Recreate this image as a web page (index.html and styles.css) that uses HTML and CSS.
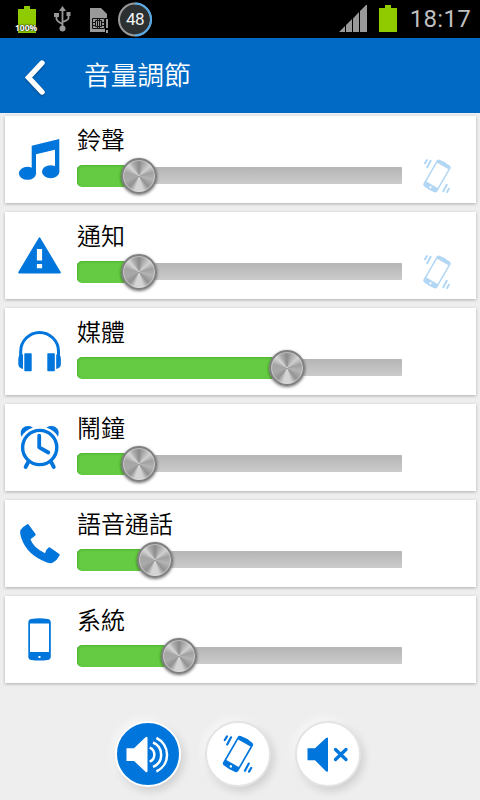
FILE: index.html
```html
<!DOCTYPE html>
<html lang="zh-Hant">
<head>
<meta charset="utf-8">
<title>音量調節</title>
<link rel="stylesheet" href="styles.css">
</head>
<body>
<svg class="defs" aria-hidden="true">
  <symbol id="vibrate" viewBox="0 0 36 40">
    <g transform="rotate(30 18 20)"><path fill="currentColor" fill-rule="evenodd" d="M12 4.600Q18 3.400 24 4.600Q26 5 26 7V33Q26 35 24 35.400Q18 36.600 12 35.400Q10 35 10 33V7Q10 5 12 4.600ZM11.500 8.500V30H24.500V8.500ZM18 31.900A1.100 1.100 0 1 0 18 34.100A1.100 1.100 0 1 0 18 31.900Z"/></g>
    <path fill="none" stroke="currentColor" stroke-width="2" stroke-linecap="round" d="M8 4L6 7.300M11.700 4.800L8.200 11.300M28 36L30 32.700M24.300 35.200L27.800 28.700"/>
  </symbol>
</svg>
<div class="statusbar">
  <div class="charge"><svg width="18" height="27"><path fill="#90cb00" d="M0 3h6V0h6v3h6v24H0z"/></svg><span>100%</span></div>
  <svg class="usb" width="18" height="27" fill="none" stroke="#999" stroke-width="1.800"><path d="M8.500 24V3M2.500 9v4q0 2 6 5M14.500 8v4q0 2-6 4"/><path fill="#999" stroke="none" d="M8.500 0L12 5H5zM0 7h5v4H0zM12.500 6h4v4h-4z"/><circle cx="8.500" cy="22.500" r="3" fill="#999" stroke="none"/></svg>
  <svg class="sim" width="20" height="26"><path fill="#999" d="M0 0h11l6 6v18H0z"/><path fill="none" stroke="#111" d="M2.500 10.500h12v10h-12zM5.500 12.500h6v6h-6zM7.500 10v11M9.500 10v11M2 14.500h3M12 14.500h3M2 17.500h3M12 17.500h3"/><path fill="#000" d="M15 10h3v16h-3z"/><path fill="#999" d="M16 11h2v9h-2zM16 22h2v3h-2z"/></svg>
  <div class="gauge"><svg width="36" height="36" fill="none" stroke-width="2"><circle cx="17" cy="18.500" r="16" fill="#2c3031" stroke="#999"/><path stroke="#55aae6" d="M17 2.500A16 16 0 0 1 17 34.500"/></svg><span>48</span></div>
  <svg class="signal" width="28" height="27" fill="#999"><path d="M0 27L6 21V27zM7 20L13 14V27H7zM14 13.500L20 7V27h-6zM21 6L27 0h1V27h-7z"/></svg>
  <svg class="battery" width="18" height="27"><path fill="#90cb00" d="M0 3h6V0h6v3h6v24H0z"/></svg>
  <span class="clock">18:17</span>
</div>
<header class="header">
  <svg class="back" width="24" height="40"><path fill="none" stroke="#fff" stroke-width="5.400" stroke-linecap="round" stroke-linejoin="miter" d="M19 5L5.500 19.500L19 34"/></svg>
  <h1>音量調節</h1>
</header>
<main class="list">
  <section class="card">
    <svg class="icon" viewBox="0 0 48 48"><path d="M15.700 9.700L43.300 3V35.700H39V13.700L20 18.200V37.300H15.700Z"/><ellipse cx="11.500" cy="37.300" rx="8.600" ry="6.500"/><ellipse cx="34.700" cy="35.700" rx="8.700" ry="6.500"/></svg>
    <div class="level"><h2>鈴聲</h2><div class="track"><div class="fill" style="width:62px"><i class="knob"></i></div></div></div>
    <svg class="mode"><use href="#vibrate"/></svg>
  </section>
  <section class="card">
    <svg class="icon" viewBox="0 0 48 48"><path stroke="currentColor" stroke-width="2" stroke-linejoin="round" d="M23.500 6.400L43.800 40.500H3.200Z"/><path fill="#fff" d="M20.900 17h5.200v11.500h-5.200zM20.900 32h5.200v4.300h-5.200z"/></svg>
    <div class="level"><h2>通知</h2><div class="track"><div class="fill" style="width:62px"><i class="knob"></i></div></div></div>
    <svg class="mode"><use href="#vibrate"/></svg>
  </section>
  <section class="card">
    <svg class="icon" viewBox="0 0 48 48"><path fill="none" stroke="currentColor" stroke-width="3" d="M4.700 30V23.500A18.900 19 0 0 1 42.500 23.500V30"/><path d="M7 26.500V41Q2.300 40 2.300 36V31Q2.300 28 3.800 26.500ZM40.200 26.500V41Q44.900 40 44.900 36V31Q44.900 28 43.400 26.500Z"/><rect x="8.300" y="25.300" width="7.400" height="17.900" rx=".7"/><rect x="31.300" y="25.300" width="7.500" height="17.900" rx=".7"/></svg>
    <div class="level"><h2>媒體</h2><div class="track"><div class="fill" style="width:210px"><i class="knob"></i></div></div></div>
  </section>
  <section class="card">
    <svg class="icon" viewBox="0 0 48 48"><path d="M5.500 12.700Q3 6 8.500 2.800Q12.500 1 17 3.500Q8.500 6.500 5.500 12.700ZM41.900 12.700Q44.400 6 38.900 2.800Q34.900 1 30.400 3.500Q38.900 6.500 41.900 12.700Z"/><g fill="none" stroke="currentColor" stroke-linecap="round"><circle cx="23.700" cy="23.500" r="17.100" stroke-width="3.400"/><path stroke-width="3.800" stroke-linejoin="round" d="M23.200 11.700V23.300L32.300 28.500M12 38.500L9.600 43M35.400 38.500L37.800 43"/></g></svg>
    <div class="level"><h2>鬧鐘</h2><div class="track"><div class="fill" style="width:62px"><i class="knob"></i></div></div></div>
  </section>
  <section class="card">
    <svg class="icon" viewBox="0 0 48 48"><path d="M4.500 10Q7 6.500 11.300 4.200Q12 3.800 12.600 4.500L19.500 14Q20 15 19 15.800L14.500 19.300Q17 27.500 29 33.200Q29.700 30 32.300 27.800Q33 27 34 27.600L43.300 34Q44 34.500 43.500 35.500Q41 40.500 37 42.600Q34.500 43.800 31 42.500Q11 35 5.500 18.500Q3.400 12.500 4.500 10Z"/></svg>
    <div class="level"><h2>語音通話</h2><div class="track"><div class="fill" style="width:78px"><i class="knob"></i></div></div></div>
  </section>
  <section class="card">
    <svg class="icon" viewBox="0 0 48 48"><path fill-rule="evenodd" d="M15.500 2.900Q23.500 1.700 31.500 2.900Q34.800 3.300 34.800 6.500V40.500Q34.800 43.600 31.500 44Q23.500 45.200 15.500 44Q12.300 43.600 12.300 40.500V6.500Q12.300 3.300 15.500 2.900ZM14 7.500V36H33V7.500ZM22.500 40V42H24.500V40Z"/></svg>
    <div class="level"><h2>系統</h2><div class="track"><div class="fill" style="width:102px"><i class="knob"></i></div></div></div>
  </section>
</main>
<footer class="modes">
  <button class="round active" aria-label="鈴聲"><svg class="glyph"><path fill="#fff" d="M11.500 27.300h7.500L30.500 16.300q2-1.500 2 .7v33q0 2.300-2 .7L19 40h-7.500z"/><path fill="none" stroke="#fff" stroke-width="2.500" d="M34.700 26.700A7.600 7.600 0 0 1 34.700 40.700M38 21.500A13.200 13.200 0 0 1 38 45.900M41.400 17A18.500 18.500 0 0 1 41.400 50.500"/></svg></button>
  <button class="round" aria-label="震動"><svg class="shake"><use href="#vibrate"/></svg></button>
  <button class="round" aria-label="靜音"><svg class="glyph"><path fill="currentColor" d="M12.500 27.300H20L31 17q2-1.500 2 .7v31.800q0 2.300-2 .7L20 39.300h-7.500z"/><path fill="none" stroke="currentColor" stroke-width="3.300" stroke-linecap="round" d="M40.500 28.500L51 38.500M51 28.500L40.500 38.500"/></svg></button>
</footer>
</body>
</html>
```

FILE: styles.css
```css
* { box-sizing: border-box; }
body {
  margin: 0;
  height: 800px;
  overflow: hidden;
  background: #eee;
  color: #000;
  font-family: Roboto, "Noto Sans CJK TC", sans-serif;
}
svg { display: block; flex: none; }
.defs { position: absolute; width: 0; height: 0; }

.statusbar { display: flex; height: 38px; padding: 0 9px 0 18px; background: #000; }
.charge { position: relative; margin-top: 6px; }
.charge span {
  position: absolute; left: -3px; top: 16px;
  font: bold 8.500px/12px "Open Sans", sans-serif;
  color: #fff; text-shadow: 0 0 1px #000, 0 0 2px #000;
}
.usb { margin: 6px 0 0 18px; }
.sim { margin: 8px 0 0 18px; }
.gauge { position: relative; margin: 1px 0 0 8px; }
.gauge span {
  position: absolute; top: 0; left: 0; width: 34px;
  color: #f2f2f2; text-align: center; font-size: 17px; line-height: 36px; letter-spacing: -.5px;
}
.signal { margin: 5px 0 0 auto; }
.battery { margin: 5px 0 0 12px; }
.clock {
  margin-left: 13px;
  color: #bfbfbf; font-size: 24px; font-weight: 400; line-height: 39px; letter-spacing: .3px;
}

.header { display: flex; align-items: center; height: 75px; padding-left: 23px; background: #006ac5; }
.back { margin-top: 4px; filter: drop-shadow(0 1px 1px #0005); }
.header h1 { margin: 1px 0 0 37px; color: #fff; font-size: 26.700px; font-weight: 350; line-height: 40px; }

.list { display: grid; gap: 9px; padding: 3px 4px 0 5px; }
.card {
  display: flex; height: 87px; padding-left: 11px;
  background: #fff; box-shadow: 0 1px 3px #0004;
}
.icon { width: 48px; height: 48px; margin-top: 20px; fill: currentColor; color: #0075db; }
.level { width: 325px; margin-left: 13px; padding-top: 9px; }
.level h2 { height: 24px; margin: 0 0 18px; font-size: 24px; font-weight: 350; line-height: 32px; }
.track { display: flex; align-items: center; height: 17px; background: linear-gradient(#b5b5b5, #cbcbcb); border-radius: 1px; }
.fill {
  position: relative; flex: none; height: 22px; border-radius: 5px 0 0 5px;
  background: #65cb42; box-shadow: inset 1px 1px 2px #2c8b1560;
}
.knob {
  position: absolute; right: -18px; top: -7px;
  width: 36px; height: 36px; border: 2px solid #808080; border-radius: 50%;
  background: conic-gradient(#8b8b8b 0deg, #b0b0b0 25deg, #d0d0d0 48deg, #a0a0a0 75deg, #b4b4b4 105deg, #929292 140deg, #d4d4d4 165deg, #d4d4d4 195deg, #929292 220deg, #aaa 250deg, #a4a4a4 285deg, #d6d6d6 315deg, #aaa 335deg, #8b8b8b 360deg);
  background-origin: border-box;
  box-shadow: 0 1px 3px #0008, inset 0 0 1px 1px #ddd9;
}
.mode { width: 36px; height: 40px; margin: 40px 0 0 17px; color: #b2d7f5; }

.modes { display: flex; justify-content: center; gap: 24px; padding: 38px 4px 0 0; }
.round {
  display: grid; place-items: center; width: 66px; height: 66px; padding: 0;
  border: 2px solid #e4e4e4; border-radius: 50%;
  background: #fff; color: #0075db; box-shadow: 3px 4px 8px #0002, -3px -3px 8px #fff9;
}
.round.active { border-color: #fff; background: #0075db; }
.glyph { width: 66px; height: 66px; margin: -2px; }
.shake { width: 40px; height: 44px; }
```
